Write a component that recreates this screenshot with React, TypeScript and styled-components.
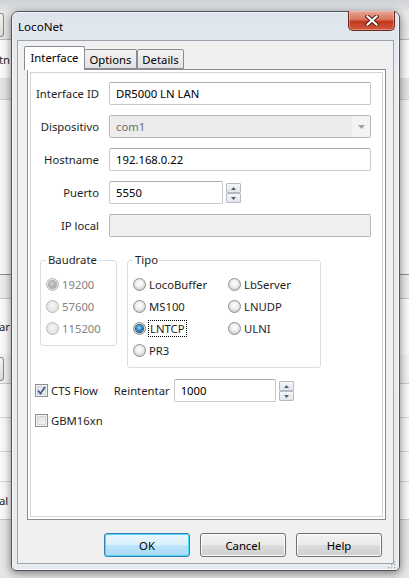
import React from 'react';
import styled, {createGlobalStyle} from 'styled-components';

/* ====== Global ====== */

const GlobalStyle = createGlobalStyle`
  html, body {
    margin: 0;
    padding: 0;
    width: 409px;
    height: 578px;
    overflow: hidden;
    background: #efefef;
  }
  * {
    box-sizing: border-box;
  }
`

const UI_FONT = `"Noto Sans", "DejaVu Sans", sans-serif`
const UI_SIZE = '11.3px'

/* ====== Window behind the dialog ====== */

const Backdrop = styled.div`
  position: relative;
  width: 409px;
  height: 578px;
  overflow: hidden;
  display: flex;
  flex-direction: column;
  background: #f4f4f4;
  font-family: ${UI_FONT};
  font-size: ${UI_SIZE};
  color: #1e1e1e;
`

const BackStrip = styled.div<{ $h: number; $bg?: string; $line?: string }>`
  flex: none;
  height: ${p => p.$h}px;
  background: ${p => p.$bg || 'transparent'};
  border-bottom: ${p => (p.$line ? `1px solid ${p.$line}` : 'none')};
  display: flex;
  align-items: center;
  padding-left: 0;
`

const BackText = styled.span`
  margin-left: -1px;
`

const BackButton = styled.div`
  width: 4px;
  height: 24px;
  border: 1px solid #8a8a8a;
  border-left: none;
  border-radius: 0 3px 3px 0;
  background: linear-gradient(#f4f4f4, #dcdcdc);
`

/* ====== Dialog frame ====== */

const Frame = styled.div`
  position: absolute;
  left: 11px;
  top: 11px;
  width: 389px;
  height: 560px;
  display: flex;
  flex-direction: column;
  border: 1px solid #4f555c;
  border-radius: 7px 7px 5px 5px;
  background: linear-gradient(#dde4ec, #e8edf2 60px, #e6ebf0);
  box-shadow: 0 2px 10px rgba(0, 0, 0, 0.5), inset 0 0 0 1px rgba(255, 255, 255, 0.6);
  font-family: ${UI_FONT};
  font-size: ${UI_SIZE};
  color: #000;
`

const TitleBar = styled.div`
  flex: none;
  height: 28px;
  display: flex;
  align-items: flex-start;
  justify-content: space-between;
  padding-left: 6px;
`

const Title = styled.span`
  line-height: 29px;
  font-size: 11.6px;
  color: #000;
`

const CloseButton = styled.div`
  width: 47px;
  height: 20px;
  margin: -1px 4px 0 0;
  display: flex;
  align-items: center;
  justify-content: center;
  border: 1px solid #6b2a1f;
  border-top: none;
  border-radius: 0 0 5px 5px;
  background: linear-gradient(#e8a898 0%, #d8735b 45%, #c2391f 55%, #d05a3c 100%);
  box-shadow: inset 0 0 0 1px rgba(255, 200, 190, 0.45);
`

const Client = styled.div`
  flex: 1;
  margin: 0 5px 6px 5px;
  display: flex;
  flex-direction: column;
  padding: 5px 7px 6px 9px;
  border: 1px solid #9aa4af;
  background: #f0f0f0;
`

/* ====== Tabs ====== */

const TabStrip = styled.div`
  flex: none;
  height: 23px;
  display: flex;
  align-items: flex-end;
  margin-left: -3px;
  position: relative;
  z-index: 1;
`

const Tab = styled.div<{ $active?: boolean; $w: number; $edge?: boolean }>`
  width: ${p => p.$w}px;
  height: ${p => (p.$active ? 24 : 20)}px;
  margin-bottom: ${p => (p.$active ? -1 : 0)}px;
  display: flex;
  align-items: center;
  justify-content: center;
  padding-bottom: ${p => (p.$active ? 2 : 0)}px;
  border: 1px solid #898c95;
  border-bottom: ${p => (p.$active ? 'none' : '1px solid #898c95')};
  border-left: ${p => (p.$active || p.$edge ? '1px solid #898c95' : 'none')};
  border-radius: 2px 2px 0 0;
  background: ${p => (p.$active ? '#fff' : 'linear-gradient(#f3f3f3, #e2e2e2)')};
`

const Panel = styled.div`
  flex: none;
  height: 451px;
  padding: 2px;
  border: 1px solid #898c95;
  background: #fff;
`

const Page = styled.div`
  height: 100%;
  display: flex;
  flex-direction: column;
  border: 1px solid #d3d3d3;
  background: #fff;
`

/* ====== Form ====== */

const FormGrid = styled.div`
  display: grid;
  grid-template-columns: 68px 262px;
  column-gap: 10px;
  row-gap: 10px;
  padding-top: 9px;
`

const Label = styled.label`
  display: flex;
  align-items: center;
  justify-content: flex-end;
  height: 23px;
  white-space: nowrap;
  color: #1e1e1e;
`

const TextBox = styled.div<{ $disabled?: boolean; $w?: number }>`
  width: ${p => (p.$w ? `${p.$w}px` : '100%')};
  height: 23px;
  display: flex;
  align-items: center;
  padding-left: 6px;
  border: 1px solid ${p => (p.$disabled ? '#b4b8bc' : '#c5cad0')};
  border-top-color: ${p => (p.$disabled ? '#adb2b5' : '#abadb3')};
  border-radius: 2px;
  background: ${p => (p.$disabled ? '#f0f0f0' : '#fff')};
  color: ${p => (p.$disabled ? '#6d6d6d' : '#000')};
  white-space: nowrap;
`

const Combo = styled.div`
  height: 23px;
  display: flex;
  align-items: center;
  border: 1px solid #b4b8bc;
  border-radius: 2px;
  background: #f4f4f4;
  color: #6d6d6d;
`

const ComboText = styled.div`
  flex: 1;
  height: 100%;
  margin: 1px 0 1px 1px;
  display: flex;
  align-items: center;
  padding-left: 5px;
  background: #ececec;
`

const ComboArrow = styled.div`
  width: 18px;
  display: flex;
  align-items: center;
  justify-content: center;
`

const SpinRow = styled.div`
  display: flex;
  align-items: center;
  gap: 3px;
`

const Spinner = styled.div`
  display: flex;
  flex-direction: column;
  padding-top: 1px;
`

const SpinButton = styled.div`
  width: 15px;
  height: 10px;
  display: flex;
  align-items: center;
  justify-content: center;
  border: 1px solid #b5bcc6;
  border-radius: 1px;
  background: linear-gradient(#f5f6f8, #e2e5ea);
`

/* ====== Groups ====== */

const GroupRow = styled.div`
  display: flex;
  align-items: flex-start;
  gap: 10px;
  margin: 15px 0 0 9px;
`

const GroupBox = styled.fieldset<{ $w: number; $h: number }>`
  width: ${p => p.$w}px;
  height: ${p => p.$h}px;
  margin: 0;
  padding: 5px 0 0 5px;
  border: 1px solid #d5dfe5;
  border-radius: 3px;
  box-shadow: inset 0 0 0 1px #fff;
  min-width: 0;
`

const Legend = styled.legend`
  margin-left: 0;
  padding: 0 2px;
  line-height: 16px;
  color: #1e1e1e;
`

const RadioGrid = styled.div<{ $cols: number }>`
  display: grid;
  grid-template-columns: ${p => (p.$cols === 2 ? '95px 1fr' : '1fr')};
  grid-auto-rows: 22px;
`

const OptionRow = styled.div<{ $disabled?: boolean }>`
  display: flex;
  align-items: center;
  gap: 3px;
  color: ${p => (p.$disabled ? '#838383' : '#1e1e1e')};
  white-space: nowrap;
`

const RadioCircle = styled.span<{ $checked?: boolean; $disabled?: boolean }>`
  flex: none;
  width: 13px;
  height: 13px;
  border-radius: 50%;
  border: 1px solid ${p => (p.$disabled ? '#b8b8b8' : '#8e8f8f')};
  display: flex;
  align-items: center;
  justify-content: center;
  background: ${p =>
    p.$disabled
      ? 'radial-gradient(circle at 50% 40%, #f6f6f6 0%, #e2e2e2 70%)'
      : 'radial-gradient(circle at 50% 40%, #ffffff 0%, #f0f0f0 40%, #cfcfcf 75%)'};

  &::after {
    content: '';
    display: ${p => (p.$checked ? 'block' : 'none')};
    width: 7px;
    height: 7px;
    border-radius: 50%;
    background: ${p =>
      p.$disabled
        ? 'radial-gradient(circle at 45% 40%, #d8d8d8 0%, #9d9d9d 80%)'
        : 'radial-gradient(circle at 45% 40%, #a6e0fb 0%, #2f8ccb 45%, #0e4d7e 90%)'};
    box-shadow: ${p => (p.$disabled ? '0 0 0 1px #aaa' : '0 0 0 1px #1d4f76')};
  }
`

const FocusText = styled.span`
  padding: 0 1px;
  outline: 1px dotted #000;
  outline-offset: 0;
  line-height: 15px;
`

/* ====== Bottom rows ====== */

const CheckRow = styled.div<{ $top: number }>`
  display: flex;
  align-items: center;
  height: 23px;
  margin: ${p => p.$top}px 0 0 4px;
  white-space: nowrap;
  color: #1e1e1e;
`

const CheckBox = styled.span`
  flex: none;
  width: 13px;
  height: 13px;
  margin-right: 3px;
  border: 1px solid #8e8f8f;
  background: linear-gradient(135deg, #dcdcdc, #fbfbfb);
  box-shadow: inset 0 0 0 1px #f4f4f4, inset 0 0 0 2px #d4d4d4;
  display: flex;
  align-items: center;
  justify-content: center;
`

const RetryLabel = styled.span`
  margin: 0 4px 0 16px;
`

/* ====== Buttons ====== */

const ButtonRow = styled.div`
  flex: none;
  display: flex;
  justify-content: flex-end;
  gap: 10px;
  margin-top: 13px;
  padding-right: 4px;
`

const DialogButton = styled.div<{ $default?: boolean }>`
  width: 86px;
  height: 24px;
  display: flex;
  align-items: center;
  justify-content: center;
  border: 1px solid ${p => (p.$default ? '#3c7fb1' : '#707070')};
  border-radius: 3px;
  background: ${p =>
    p.$default
      ? 'linear-gradient(#eaf6fd 0%, #d9f0fc 50%, #bee6fd 50%, #a7d9f5 100%)'
      : 'linear-gradient(#f2f2f2 0%, #ebebeb 50%, #dddddd 50%, #cfcfcf 100%)'};
  box-shadow: inset 0 0 0 1px ${p => (p.$default ? '#48d9fb' : '#fcfcfc')};
  color: #000;
`

const Grip = styled.div`
  position: absolute;
  right: 2px;
  bottom: 2px;
  width: 10px;
  height: 10px;
`

/* ====== Drawings ====== */

const CloseGlyph = () => (
  <svg width="14" height="11" viewBox="0 0 14 11">
    <path d="M2.5 1.5 L11.5 9.5 M11.5 1.5 L2.5 9.5" stroke="#4a1a12" strokeWidth="4" strokeLinecap="square" />
    <path d="M2.5 1.5 L11.5 9.5 M11.5 1.5 L2.5 9.5" stroke="#ffffff" strokeWidth="2.2" strokeLinecap="square" />
  </svg>
)

const Arrow = ({ up, color = '#4d6078', w = 5 }: { up?: boolean; color?: string; w?: number }) => (
  <svg width={w} height={Math.ceil(w / 2)} viewBox={`0 0 ${w} ${Math.ceil(w / 2)}`}>
    {up ? (
      <polygon points={`0,${Math.ceil(w / 2)} ${w},${Math.ceil(w / 2)} ${w / 2},0`} fill={color} />
    ) : (
      <polygon points={`0,0 ${w},0 ${w / 2},${Math.ceil(w / 2)}`} fill={color} />
    )}
  </svg>
)

const CheckMark = () => (
  <svg width="9" height="9" viewBox="0 0 9 9">
    <path d="M1 4.5 L3.5 7.5 L8 1" fill="none" stroke="#3e5a99" strokeWidth="1.8" />
  </svg>
)

const GripDots = () => (
  <svg width="10" height="10" viewBox="0 0 10 10">
    {[[8, 2], [5, 5], [8, 5], [2, 8], [5, 8], [8, 8]].map(([x, y]) => (
      <g key={`${x}-${y}`}>
        <rect x={x} y={y} width="1.5" height="1.5" fill="#fff" />
        <rect x={x - 1} y={y - 1} width="1.5" height="1.5" fill="#a6aeb6" />
      </g>
    ))}
  </svg>
)

/* ====== Components ====== */

const Radio = ({ label, checked, disabled, focused }: { label: string; checked?: boolean; disabled?: boolean; focused?: boolean }) => (
  <OptionRow $disabled={disabled}>
    <RadioCircle $checked={checked} $disabled={disabled} />
    {focused ? <FocusText>{label}</FocusText> : <span>{label}</span>}
  </OptionRow>
)

const SpinBox = ({ value, width }: { value: string; width: number }) => (
  <SpinRow>
    <TextBox $w={width}>{value}</TextBox>
    <Spinner>
      <SpinButton><Arrow up /></SpinButton>
      <SpinButton><Arrow /></SpinButton>
    </Spinner>
  </SpinRow>
)

const App = () => {
  return (
    <>
      <GlobalStyle />
      <Backdrop>
        <BackStrip $h={11} $bg="linear-gradient(#cfd2d5, #e2e4e6)" />
        <BackStrip $h={29} $bg="#e9e9e9" $line="#b9b9b9"><BackButton /></BackStrip>
        <BackStrip $h={38} $bg="#fbfbfb"><BackText>tn</BackText></BackStrip>
        <BackStrip $h={22} $bg="#e4e4e4" $line="#d0d0d0" />
        <BackStrip $h={175} $bg="#f6f6f6" $line="#8f8f8f" />
        <BackStrip $h={24} $bg="#ededed" $line="#c7c7c7" />
        <BackStrip $h={55} $bg="#fbfbfb"><BackText>ar</BackText></BackStrip>
        <BackStrip $h={30} $bg="#f3f3f3" $line="#c9c9c9"><BackButton /></BackStrip>
        <BackStrip $h={34} $bg="#fafafa" $line="#d5d5d5" />
        <BackStrip $h={34} $bg="#fafafa" $line="#d5d5d5" />
        <BackStrip $h={30} $bg="#fafafa" $line="#d5d5d5" />
        <BackStrip $h={38} $bg="#fafafa" $line="#c5c5c5"><BackText>al</BackText></BackStrip>
        <BackStrip $h={60} $bg="#e6e6e6" />

        <Frame>
          <TitleBar>
            <Title>LocoNet</Title>
            <CloseButton><CloseGlyph /></CloseButton>
          </TitleBar>

          <Client>
            <TabStrip>
              <Tab $active $w={61}>Interface</Tab>
              <Tab $w={52}>Options</Tab>
              <Tab $w={47} $edge>Details</Tab>
            </TabStrip>

            <Panel>
              <Page>
                <FormGrid>
                  <Label>Interface ID</Label>
                  <TextBox>DR5000 LN LAN</TextBox>

                  <Label>Dispositivo</Label>
                  <Combo>
                    <ComboText>com1</ComboText>
                    <ComboArrow><Arrow color="#a0a0a0" w={7} /></ComboArrow>
                  </Combo>

                  <Label>Hostname</Label>
                  <TextBox>192.168.0.22</TextBox>

                  <Label>Puerto</Label>
                  <SpinBox value="5550" width={114} />

                  <Label>IP local</Label>
                  <TextBox $disabled />
                </FormGrid>

                <GroupRow>
                  <GroupBox $w={77} $h={94}>
                    <Legend>Baudrate</Legend>
                    <RadioGrid $cols={1}>
                      <Radio label="19200" checked disabled />
                      <Radio label="57600" disabled />
                      <Radio label="115200" disabled />
                    </RadioGrid>
                  </GroupBox>

                  <GroupBox $w={194} $h={116}>
                    <Legend>Tipo</Legend>
                    <RadioGrid $cols={2}>
                      <Radio label="LocoBuffer" />
                      <Radio label="LbServer" />
                      <Radio label="MS100" />
                      <Radio label="LNUDP" />
                      <Radio label="LNTCP" checked focused />
                      <Radio label="ULNI" />
                      <Radio label="PR3" />
                    </RadioGrid>
                  </GroupBox>
                </GroupRow>

                <CheckRow $top={11}>
                  <CheckBox><CheckMark /></CheckBox>
                  CTS Flow
                  <RetryLabel>Reintentar</RetryLabel>
                  <SpinBox value="1000" width={102} />
                </CheckRow>

                <CheckRow $top={7}>
                  <CheckBox />
                  GBM16xn
                </CheckRow>
              </Page>
            </Panel>

            <ButtonRow>
              <DialogButton $default>OK</DialogButton>
              <DialogButton>Cancel</DialogButton>
              <DialogButton>Help</DialogButton>
            </ButtonRow>
          </Client>

          <Grip><GripDots /></Grip>
        </Frame>
      </Backdrop>
    </>
  );
}

export default App;
